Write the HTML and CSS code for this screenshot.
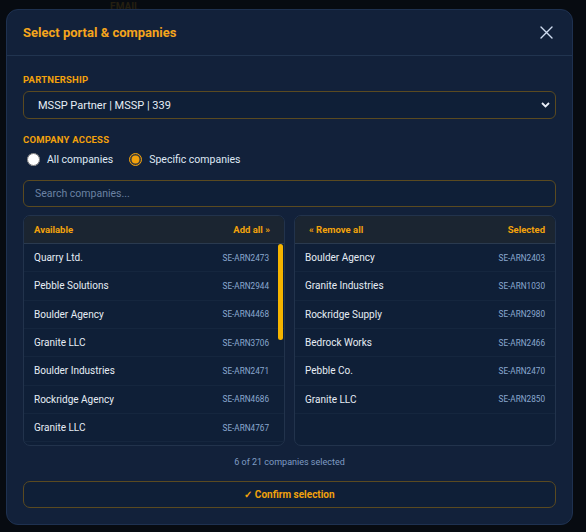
FILE: index.html
```html
<!DOCTYPE html>
<html lang="en">
<head>
    <meta charset="UTF-8">
    <meta name="viewport" content="width=device-width, initial-scale=1.0">
    <title>Select portal</title>
    <link rel="stylesheet" href="styles.css">
</head>
<body>
    <div class="page">
        <label class="page-label">EMAIL</label>
    </div>

    <div class="overlay">
        <div class="modal">
            <div class="modal-head">
                <h2>Select portal &amp; companies</h2>
                <button class="close" aria-label="Close">
                    <svg width="13" height="13" viewBox="0 0 13 13"><path d="M1 1 L12 12 M12 1 L1 12" stroke="#cfdcf0" stroke-width="1.4" fill="none" stroke-linecap="round"/></svg>
                </button>
            </div>

            <div class="modal-body">
                <div class="field-label">PARTNERSHIP</div>
                <div class="select-box">
                    <select>
                        <option>MSSP Partner | MSSP | 339</option>
                    </select>
                    <svg class="chevron" width="9" height="6" viewBox="0 0 9 6"><path d="M1 1 L4.5 4.5 L8 1" stroke="#e8eef7" stroke-width="1.8" fill="none"/></svg>
                </div>

                <div class="field-label access">COMPANY ACCESS</div>
                <div class="radios">
                    <label><input type="radio" name="access"> All companies</label>
                    <label><input type="radio" name="access" checked> Specific companies</label>
                </div>

                <input class="search" type="text" placeholder="Search companies...">

                <div class="lists">
                    <div class="panel">
                        <div class="panel-head">
                            <span>Available</span>
                            <button class="link">Add all &raquo;</button>
                        </div>
                        <ul class="rows scroll">
                            <li><span>Quarry Ltd.</span><em>SE-ARN2473</em></li>
                            <li><span>Pebble Solutions</span><em>SE-ARN2944</em></li>
                            <li><span>Boulder Agency</span><em>SE-ARN4468</em></li>
                            <li><span>Granite LLC</span><em>SE-ARN3706</em></li>
                            <li><span>Boulder Industries</span><em>SE-ARN2471</em></li>
                            <li><span>Rockridge Agency</span><em>SE-ARN4686</em></li>
                            <li><span>Granite LLC</span><em>SE-ARN4767</em></li>
                            <li><span>Bedrock Supply</span><em>SE-ARN3312</em></li>
                            <li><span>Quarry Works</span><em>SE-ARN1187</em></li>
                            <li><span>Pebble Agency</span><em>SE-ARN2059</em></li>
                            <li><span>Rockridge Ltd.</span><em>SE-ARN3841</em></li>
                            <li><span>Boulder Co.</span><em>SE-ARN4120</em></li>
                            <li><span>Granite Solutions</span><em>SE-ARN2795</em></li>
                            <li><span>Bedrock Industries</span><em>SE-ARN1643</em></li>
                            <li><span>Quarry Supply</span><em>SE-ARN3528</em></li>
                        </ul>
                        <div class="thumb"></div>
                    </div>

                    <div class="panel">
                        <div class="panel-head">
                            <button class="link">&laquo; Remove all</button>
                            <span>Selected</span>
                        </div>
                        <ul class="rows">
                            <li><span>Boulder Agency</span><em>SE-ARN2403</em></li>
                            <li><span>Granite Industries</span><em>SE-ARN1030</em></li>
                            <li><span>Rockridge Supply</span><em>SE-ARN2980</em></li>
                            <li><span>Bedrock Works</span><em>SE-ARN2466</em></li>
                            <li><span>Pebble Co.</span><em>SE-ARN2470</em></li>
                            <li><span>Granite LLC</span><em>SE-ARN2850</em></li>
                        </ul>
                    </div>
                </div>

                <p class="count">6 of 21 companies selected</p>

                <button class="confirm">&#10003; Confirm selection</button>
            </div>
        </div>
    </div>
</body>
</html>
```

FILE: styles.css
```css
* {
    margin: 0;
    padding: 0;
    box-sizing: border-box;
}

body {
    font-family: Roboto, "Liberation Sans", sans-serif;
    background: #0b0f15;
    color: #e6edf5;
    height: 532px;
    overflow: hidden;
    position: relative;
}

.page {
    padding-left: 110px;
}

.page-label {
    display: block;
    font-size: 10px;
    font-weight: 700;
    line-height: 12px;
    color: #4a3b14;
    margin-top: 1px;
}

.overlay {
    position: absolute;
    inset: 0;
    background: rgba(6, 9, 14, 0.55);
}

.modal {
    position: absolute;
    top: 9px;
    left: 6px;
    width: 567px;
    height: 516px;
    background: #12213a;
    border: 1px solid #1e3150;
    border-radius: 12px;
}

.modal-head {
    display: flex;
    justify-content: space-between;
    align-items: center;
    height: 46px;
    padding: 0 16px;
    border-bottom: 1px solid #21344f;
}

.modal-head h2 {
    font-size: 13px;
    font-weight: 700;
    color: #f5a51c;
}

.close {
    background: none;
    border: none;
    display: flex;
    margin-right: 3px;
    cursor: pointer;
}

.modal-body {
    padding: 17px 16px 16px;
}

.field-label {
    font-size: 9.5px;
    font-weight: 700;
    line-height: 14px;
    letter-spacing: 0.2px;
    color: #f2a20c;
    margin-bottom: 4px;
}

.field-label.access {
    margin-top: 14px;
    margin-bottom: 4px;
}

.select-box {
    position: relative;
}

.select-box select {
    appearance: none;
    width: 100%;
    height: 28px;
    background: #0f1f37;
    border: 1px solid #5a4a20;
    border-radius: 6px;
    color: #e6edf5;
    font-family: Roboto, "Liberation Sans", sans-serif;
    font-size: 11px;
    padding-left: 14px;
    outline: none;
}

.select-box .chevron {
    position: absolute;
    right: 6px;
    top: 11px;
    pointer-events: none;
}

.radios {
    display: flex;
    gap: 16px;
    height: 16px;
    align-items: center;
    padding-left: 4px;
}

.radios label {
    display: flex;
    align-items: center;
    gap: 7px;
    font-size: 10.5px;
    color: #dfe8f4;
}

.radios input {
    width: 13px;
    height: 13px;
    margin: 0;
    accent-color: #f2a20c;
}

.search {
    display: block;
    width: 100%;
    height: 27px;
    margin-top: 13px;
    background: #0f1f37;
    border: 1px solid #5a4a20;
    border-radius: 6px;
    color: #e6edf5;
    font-family: Roboto, "Liberation Sans", sans-serif;
    font-size: 10.5px;
    padding-left: 11px;
    outline: none;
}

.search::placeholder {
    color: #6b82a3;
}

.lists {
    display: grid;
    grid-template-columns: 1fr 1fr;
    gap: 9px;
    margin-top: 8px;
}

.panel {
    position: relative;
    height: 231px;
    border: 1px solid #22334c;
    border-radius: 7px;
    background: #0f1f37;
    overflow: hidden;
    display: flex;
    flex-direction: column;
}

.panel-head {
    display: flex;
    justify-content: space-between;
    align-items: center;
    height: 28px;
    flex-shrink: 0;
    padding: 0 10px;
    background: #1b2531;
    border-bottom: 1px solid #2a3a4f;
    font-size: 9.5px;
    font-weight: 700;
    color: #f2a20c;
}

.link {
    background: none;
    border: none;
    padding: 0 4px;
    font-family: Roboto, "Liberation Sans", sans-serif;
    font-size: 9.5px;
    font-weight: 700;
    color: #f2a20c;
    cursor: pointer;
}

.rows {
    list-style: none;
    flex: 1;
}

.rows.scroll {
    overflow: hidden;
}

.rows.scroll li {
    padding-right: 15px;
}

/* scrollbar thumb, drawn since the real one is hidden */
.thumb {
    position: absolute;
    top: 28px;
    right: 1px;
    width: 5px;
    height: 96px;
    border-radius: 3px;
    background: #f5b400;
}

.rows li {
    display: flex;
    justify-content: space-between;
    align-items: center;
    height: 28.33px;
    padding: 0 10px;
    border-bottom: 1px solid #15263e;
}

.rows li span {
    font-size: 10px;
    color: #e6edf5;
}

.rows li em {
    font-style: normal;
    font-size: 8.2px;
    color: #8aa8cf;
}

.count {
    margin-top: 9px;
    text-align: center;
    font-size: 9px;
    line-height: 14px;
    color: #7f9cc3;
}

.confirm {
    display: block;
    width: 100%;
    height: 27px;
    margin-top: 12px;
    background: #0f1f37;
    border: 1px solid #5a4a20;
    border-radius: 7px;
    font-family: Roboto, "Liberation Sans", sans-serif;
    font-size: 10px;
    font-weight: 700;
    color: #f2a20c;
    cursor: pointer;
}
```
